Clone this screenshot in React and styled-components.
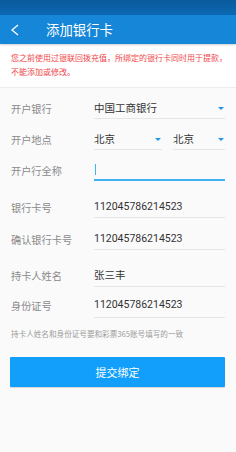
import React from "react";
import styled, { createGlobalStyle } from "styled-components";

const GlobalStyle = createGlobalStyle`
  html, body {
    margin: 0;
    padding: 0;
    background: #fafafa;
    font-family: "Noto Sans CJK SC", "Noto Sans", sans-serif;
  }
`;

const Page = styled.div`
  width: 236px;
  min-height: 452px;
  background: #fafafa;
  display: flex;
  flex-direction: column;
`;

const StatusBar = styled.div`
  height: 15px;
  background: linear-gradient(#0a5a9c, #0c69b4);
`;

const AppBar = styled.div`
  height: 29px;
  background: #1686d8;
  display: flex;
  align-items: center;
  box-shadow: 0 1px 2px rgba(0, 0, 0, 0.2);
  position: relative;
  z-index: 1;
`;

const BackButton = styled.div`
  width: 46px;
  height: 29px;
  display: flex;
  align-items: center;
  padding-left: 10px;
  box-sizing: border-box;
`;

const Title = styled.div`
  color: #fff;
  font-size: 13.4px;
  line-height: 29px;
`;

const Notice = styled.div`
  background: #fff;
  color: #f0474a;
  font-size: 8px;
  line-height: 14px;
  padding: 7px 6px 8px 11px;
  border-bottom: 1px solid #ececec;
`;

const Form = styled.div`
  padding: 8px 11px 0 11px;
`;

const Row = styled.div`
  display: flex;
  align-items: flex-end;
  height: ${({ $h }) => $h || 31}px;
`;

const Label = styled.div`
  width: 83px;
  flex: none;
  font-size: 10.2px;
  line-height: 20px;
  color: #8a8a8a;
  padding-bottom: ${({ $lift }) => $lift || 0}px;
`;

const Fields = styled.div`
  flex: 1;
  display: flex;
  gap: 11px;
`;

const Field = styled.div`
  flex: ${({ $grow }) => $grow || 1};
  height: 20px;
  line-height: 20px;
  padding-bottom: ${({ $lift }) => $lift || 0}px;
  display: flex;
  align-items: center;
  justify-content: space-between;
  border-bottom: ${({ $active }) => ($active ? "2px solid #41b3f3" : "1px solid #e6e6e6")};
  font-size: 10.5px;
  color: #333;
  font-family: ${({ $num }) =>
    $num ? '"Roboto", "Noto Sans", sans-serif' : '"Noto Sans CJK SC", sans-serif'};
`;

const Caret = styled.div`
  width: 0;
  height: 0;
  border-left: 3px solid transparent;
  border-right: 3px solid transparent;
  border-top: 3px solid #1e98ee;
  margin-right: 1px;
`;

const Cursor = styled.div`
  width: 1px;
  height: 11px;
  background: #41b3f3;
  margin-left: 1px;
`;

const Hint = styled.div`
  font-size: 7.6px;
  color: #9a9a9a;
  margin-top: 10px;
`;

const SubmitButton = styled.button`
  display: block;
  width: 215px;
  height: 30px;
  margin: 18px 0 0 10px;
  border: none;
  border-radius: 1px;
  background: #129ffb;
  color: #fff;
  font-size: 11px;
  font-family: "Noto Sans CJK SC", sans-serif;
  box-shadow: 0 1px 1px rgba(0, 0, 0, 0.15);
`;

const App = () => {
  const card = "112045786214523";
  return (
    <Page>
      <GlobalStyle />
      <StatusBar />
      <AppBar>
        <BackButton>
          <svg width="10" height="12" viewBox="0 0 10 12">
            <path d="M8 1 L2 6 L8 11" stroke="#fff" strokeWidth="1.3" fill="none" />
          </svg>
        </BackButton>
        <Title>添加银行卡</Title>
      </AppBar>
      <Notice>
        您之前使用过银联回拨充值，所绑定的银行卡同时用于提款，不能添加或修改。
      </Notice>
      <Form>
        <Row $h={23}>
          <Label>开户银行</Label>
          <Fields>
            <Field>
              中国工商银行
              <Caret />
            </Field>
          </Fields>
        </Row>
        <Row>
          <Label>开户地点</Label>
          <Fields>
            <Field $grow={68}>
              北京
              <Caret />
            </Field>
            <Field $grow={52}>
              北京
              <Caret />
            </Field>
          </Fields>
        </Row>
        <Row>
          <Label>开户行全称</Label>
          <Fields>
            <Field $active>
              <Cursor />
            </Field>
          </Fields>
        </Row>
        <Row $h={37}>
          <Label>银行卡号</Label>
          <Fields>
            <Field $num>{card}</Field>
          </Fields>
        </Row>
        <Row $h={32}>
          <Label>确认银行卡号</Label>
          <Fields>
            <Field $num>{card}</Field>
          </Fields>
        </Row>
        <Row $h={37}>
          <Label $lift={1}>持卡人姓名</Label>
          <Fields>
            <Field $lift={1}>张三丰</Field>
          </Fields>
        </Row>
        <Row $h={31}>
          <Label $lift={2}>身份证号</Label>
          <Fields>
            <Field $num $lift={2}>{card}</Field>
          </Fields>
        </Row>
        <Hint>持卡人姓名和身份证号要和彩票365账号填写的一致</Hint>
      </Form>
      <SubmitButton>提交绑定</SubmitButton>
    </Page>
  );
};

export default App;
